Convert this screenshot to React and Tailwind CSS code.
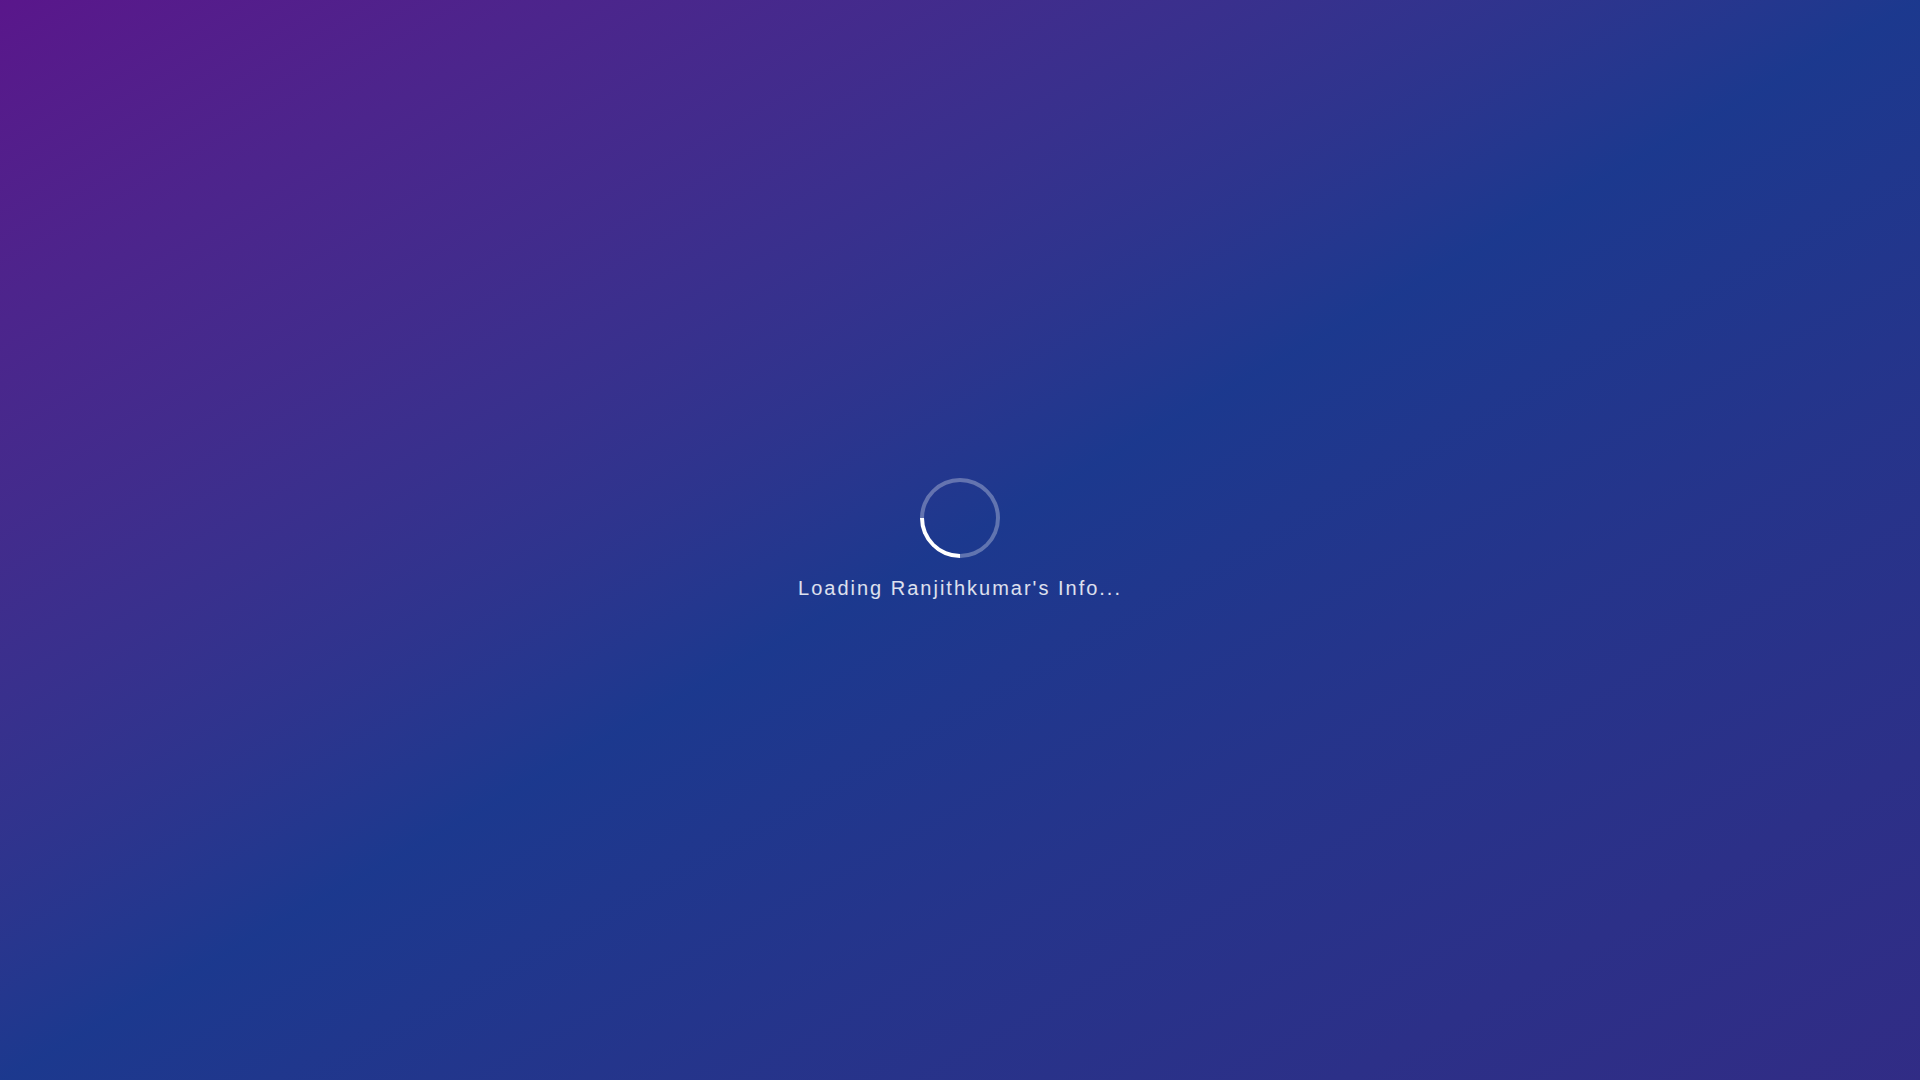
import React from "react";

const App = () => {
  return (
    <div className="min-h-screen w-full bg-gradient-to-br from-purple-900 via-blue-900 to-indigo-900 flex items-center justify-center">
      <div className="flex flex-col items-center">
        <div className="w-20 h-20 rounded-full border-4 border-white/30 border-l-white -rotate-45" />
        <p className="mt-4 text-xl tracking-widest text-white/85 font-['Liberation_Sans',Arial,sans-serif]">
          Loading Ranjithkumar's Info...
        </p>
      </div>
    </div>
  );
};

export default App;
